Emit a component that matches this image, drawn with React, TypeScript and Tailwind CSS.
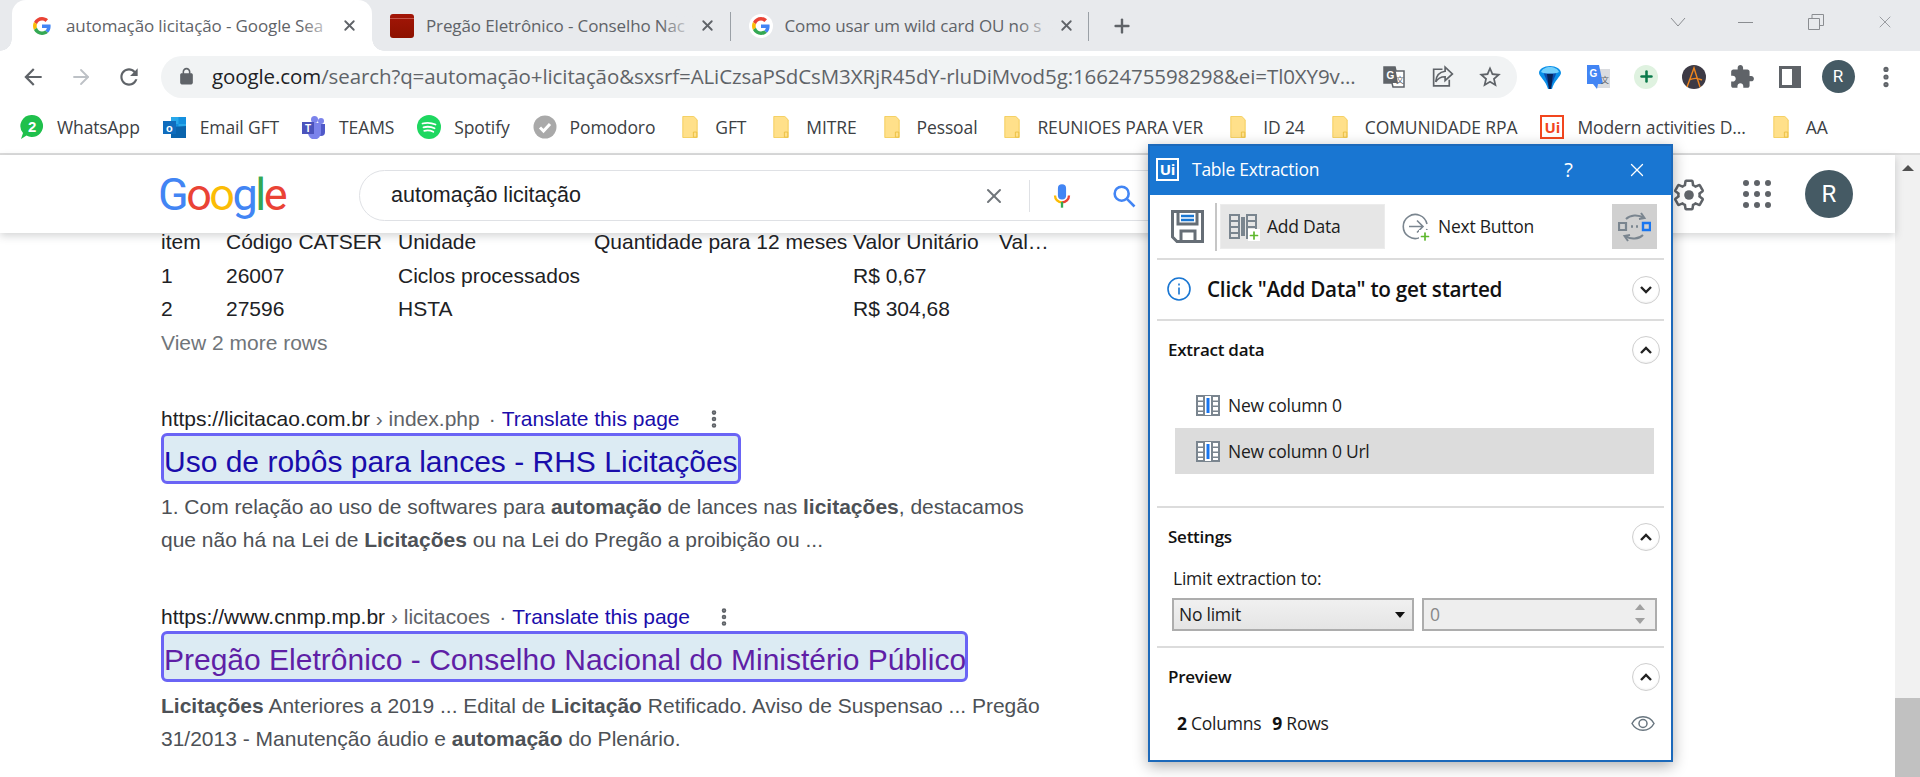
import { ArrowRight, EllipsisVertical, Plus, X } from 'lucide-react';
import type { ReactNode } from 'react';

/* material glyphs used by chrome and google */
const BACK = 'M20 11H7.83l5.59-5.59L12 4l-8 8 8 8 1.41-1.41L7.83 13H20v-2z';
const RELOAD =
  'M17.65 6.35C16.2 4.9 14.21 4 12 4c-4.42 0-7.99 3.58-7.99 8s3.57 8 7.99 8c3.73 0 6.84-2.55 7.73-6h-2.08c-.82 2.33-3.04 4-5.65 4-3.31 0-6-2.69-6-6s2.69-6 6-6c1.66 0 3.14.69 4.22 1.78L13 11h7V4l-2.35 2.35z';
const LOCK =
  'M18 8h-1V6c0-2.76-2.24-5-5-5S7 3.24 7 6v2H6c-1.1 0-2 .9-2 2v10c0 1.1.9 2 2 2h12c1.1 0 2-.9 2-2V10c0-1.1-.9-2-2-2zM9 6c0-1.66 1.34-3 3-3s3 1.34 3 3v2H9V6z';
const STAR =
  'M22 9.24l-7.19-.62L12 2 9.19 8.63 2 9.24l5.46 4.73L5.82 21 12 17.27 18.18 21l-1.63-7.03L22 9.24zM12 15.4l-3.76 2.27 1-4.28-3.32-2.88 4.38-.38L12 6.1l1.71 4.04 4.38.38-3.32 2.88 1 4.28L12 15.4z';
const PUZZLE =
  'M20.5 11H19V7c0-1.1-.9-2-2-2h-4V3.5C13 2.12 11.88 1 10.5 1S8 2.12 8 3.5V5H4c-1.1 0-1.99.9-1.99 2v3.8H3.5c1.49 0 2.7 1.21 2.7 2.7s-1.21 2.7-2.7 2.7H2V20c0 1.1.9 2 2 2h3.8v-1.5c0-1.49 1.21-2.7 2.7-2.7 1.49 0 2.7 1.21 2.7 2.7V22H17c1.1 0 2-.9 2-2v-4h1.5c1.38 0 2.5-1.12 2.5-2.5S21.88 11 20.5 11z';
const GEAR =
  'M19.43 12.98c.04-.32.07-.64.07-.98s-.03-.66-.07-.98l2.11-1.65c.19-.15.24-.42.12-.64l-2-3.46c-.12-.22-.39-.3-.61-.22l-2.49 1c-.52-.4-1.08-.73-1.69-.98l-.38-2.65C14.46 2.18 14.25 2 14 2h-4c-.25 0-.46.18-.49.42l-.38 2.65c-.61.25-1.17.59-1.69.98l-2.49-1c-.23-.09-.49 0-.61.22l-2 3.46c-.13.22-.07.49.12.64l2.11 1.65c-.04.32-.07.65-.07.98s.03.66.07.98l-2.11 1.65c-.19.15-.24.42-.12.64l2 3.46c.12.22.39.3.61.22l2.49-1c.52.4 1.08.73 1.69.98l.38 2.65c.03.24.24.42.49.42h4c.25 0 .46-.18.49-.42l.38-2.65c.61-.25 1.17-.59 1.69-.98l2.49 1c.23.09.49 0 .61-.22l2-3.46c.12-.22.07-.49-.12-.64l-2.11-1.65z';

function Glyph({ d, className }: { d: string; className?: string }) {
  return (
    <svg viewBox="0 0 24 24" fill="currentColor" className={className}>
      <path d={d} />
    </svg>
  );
}

function GoogleG({ className }: { className?: string }) {
  return (
    <svg viewBox="0 0 48 48" className={className}>
      <path fill="#EA4335" d="M24 9.5c3.54 0 6.71 1.22 9.21 3.6l6.85-6.85C35.9 2.38 30.47 0 24 0 14.62 0 6.51 5.38 2.56 13.22l7.98 6.19C12.43 13.72 17.74 9.5 24 9.5z" />
      <path fill="#4285F4" d="M46.98 24.55c0-1.57-.15-3.09-.38-4.55H24v9.02h12.94c-.58 2.96-2.26 5.48-4.78 7.18l7.73 6c4.51-4.18 7.09-10.36 7.09-17.65z" />
      <path fill="#FBBC05" d="M10.53 28.59c-.48-1.45-.76-2.99-.76-4.59s.27-3.14.76-4.59l-7.98-6.19C.92 16.46 0 20.12 0 24c0 3.88.92 7.54 2.56 10.78l7.97-6.19z" />
      <path fill="#34A853" d="M24 48c6.48 0 11.93-2.13 15.89-5.81l-7.73-6c-2.15 1.45-4.92 2.3-8.16 2.3-6.26 0-11.57-4.22-13.47-9.91l-7.98 6.19C6.51 42.62 14.62 48 24 48z" />
    </svg>
  );
}

function Tab({
  icon,
  title,
  active,
  divider,
}: {
  icon: ReactNode;
  title: string;
  active?: boolean;
  divider?: boolean;
}) {
  return (
    <div
      className={`relative flex h-[51px] items-center pl-[18px] pr-[11px] ${
        active ? 'w-[360px] rounded-t-[14px] bg-white' : 'w-[358.5px]'
      }`}
    >
      {active && (
        <>
          <span className="absolute -left-3 bottom-0 size-3 bg-[radial-gradient(circle_at_0_0,#e8eaed_11.5px,#fff_12px)]" />
          <span className="absolute -right-3 bottom-0 size-3 bg-[radial-gradient(circle_at_100%_0,#e8eaed_11.5px,#fff_12px)]" />
        </>
      )}
      <span className="flex w-6 shrink-0 justify-center">{icon}</span>
      <div className="relative ml-3 min-w-0 flex-1 overflow-hidden whitespace-nowrap text-[17px] tracking-[-0.12px] text-[#5f6368]">
        {title}
        <span
          className={`absolute inset-y-0 right-0 w-9 bg-gradient-to-r from-transparent ${
            active ? 'to-white' : 'to-[#e8eaed]'
          }`}
        />
      </div>
      <span className="flex w-6 shrink-0 justify-center">
        <X className="size-[17px] text-[#5f6368]" strokeWidth={2.6} />
      </span>
      {divider && <span className="absolute right-0 top-3 h-[29px] w-px bg-[#9aa0a6]" />}
    </div>
  );
}

function TabStrip() {
  return (
    <div className="flex h-[51px] items-start bg-[#e8eaed] pl-3">
      <Tab active icon={<GoogleG className="size-[18px]" />} title="automação licitação - Google Sea" />
      <Tab
        divider
        icon={
          <span className="h-6 w-6 rounded-[3px] bg-gradient-to-b from-[#a31608] to-[#8c1100]">
            <span className="mt-1 block h-px bg-[#c4564c]" />
          </span>
        }
        title="Pregão Eletrônico - Conselho Nac"
      />
      <Tab
        divider
        icon={
          <span className="flex size-6 items-center justify-center rounded-full bg-white">
            <GoogleG className="size-[18px]" />
          </span>
        }
        title="Como usar um wild card OU no s"
      />
      <div className="ml-[9px] flex h-[51px] w-12 items-center justify-center">
        <Plus className="size-[22px] text-[#5f6368]" strokeWidth={2.6} />
      </div>
      <div className="ml-auto flex h-[44px] items-center text-[#8a8d91]">
        <svg viewBox="0 0 16 10" className="mr-[52px] h-[10px] w-4" fill="none" stroke="currentColor">
          <path d="M1 1l7 8 7-8" />
        </svg>
        <span className="mr-[55px] h-px w-[15px] bg-current" />
        <svg viewBox="0 0 16 16" className="mr-[51px] size-[16px]" fill="none" stroke="currentColor">
          <path d="M.5 4.5h11v11H.5zM4 4.5V.5h11.5v11h-4" />
        </svg>
        <X className="mr-[25px] size-[20px]" strokeWidth={1} />
      </div>
    </div>
  );
}

function ToolSlot({ children }: { children: ReactNode }) {
  return <div className="flex h-12 w-12 shrink-0 items-center justify-center">{children}</div>;
}

function AddressBar() {
  return (
    <div className="flex h-[51px] items-center bg-white pl-[9px]">
      <ToolSlot>
        <Glyph d={BACK} className="size-[26px] text-[#5f6368]" />
      </ToolSlot>
      <ToolSlot>
        <ArrowRight className="size-[24px] text-[#bdc1c6]" strokeWidth={1.8} />
      </ToolSlot>
      <ToolSlot>
        <Glyph d={RELOAD} className="size-[26px] text-[#5f6368]" />
      </ToolSlot>
      <div className="ml-2 flex h-[42px] w-[1356px] items-center rounded-full bg-[#f1f3f4] pl-4 pr-[3px]">
        <Glyph d={LOCK} className="size-[19px] shrink-0 text-[#5f6368]" />
        <div className="ml-4 w-[1145px] whitespace-nowrap text-[20.5px] tracking-[-0.1px] text-[#5f6368]">
          <span className="text-[#202124]">google.com</span>
          /search?q=automação+licitação&amp;sxsrf=ALiCzsaPSdCsM3XRjR45dY-rluDiMvod5g:1662475598298&amp;ei=Tl0XY9v...
        </div>
        <div className="ml-auto flex">
          <ToolSlot>
            <svg viewBox="0 0 24 24" className="size-6">
              <path d="M2 2h11l1 4h8v16H11l-1-4H2z" fill="#fff" stroke="#5f6368" strokeWidth="1.5" />
              <path d="M2 2h11l3 16H2z" fill="#5f6368" />
              <text x="4.5" y="14" fontSize="10" fontWeight="700" fill="#fff" fontFamily="Liberation Sans, sans-serif">G</text>
              <text x="14" y="18" fontSize="8" fill="#5f6368" fontFamily="Noto Sans CJK SC, sans-serif">文</text>
            </svg>
          </ToolSlot>
          <ToolSlot>
            <svg viewBox="0 0 24 24" className="size-[25px]" fill="none" stroke="#5f6368" strokeWidth="1.6">
              <path d="M12 5H3.5v16h15v-6" />
              <path d="M14.5 3l7 6.5-7 6.5v-3.8c-4 0-7 1.3-9 5 .3-5.3 3.3-9.5 9-10.2z" />
            </svg>
          </ToolSlot>
          <ToolSlot>
            <Glyph d={STAR} className="size-[26px] text-[#5f6368]" />
          </ToolSlot>
        </div>
      </div>
      <div className="ml-[9px] flex">
        <ToolSlot>
          <svg viewBox="0 0 24 24" className="size-[24px]">
            <path d="M1 8c0-4 5-7 11-7s11 3 11 7c0 3-7 8-9 16h-4C8 16 1 11 1 8z" fill="#0a8fe8" />
            <path d="M6 8c0-3 3-6 6-6s6 3 6 6c0 3-4 8-5 16h-2C10 16 6 11 6 8z" fill="#0b4fae" />
            <path d="M3 7c1-3 5-5 9-5s8 2 9 5c-3 2-15 2-18 0z" fill="#74d0fb" />
            <path d="M9 9h6l-2 15h-2z" fill="#06235a" />
          </svg>
        </ToolSlot>
        <ToolSlot>
          <svg viewBox="0 0 24 26" className="size-[26px]">
            <path d="M11 5h13v19H11z" fill="#dadce0" />
            <path d="M1 1h12l4 19h-5l-1 5-4-5H1z" fill="#4285f4" />
            <text x="3.5" y="13" fontSize="10" fontWeight="700" fill="#fff" fontFamily="Liberation Sans, sans-serif">G</text>
            <text x="15" y="19" fontSize="8" fill="#5f6368" fontFamily="Noto Sans CJK SC, sans-serif">文</text>
          </svg>
        </ToolSlot>
        <ToolSlot>
          <span className="flex size-6 items-center justify-center rounded-full bg-[#dff2e0]">
            <Plus className="size-[17px] text-[#0b7a4b]" strokeWidth={3.6} />
          </span>
        </ToolSlot>
        <ToolSlot>
          <span className="flex size-6 items-center justify-center rounded-full bg-[#3d3a45]">
            <svg viewBox="0 0 24 24" className="size-6" fill="none" stroke="#f0861e" strokeWidth="1.4">
              <path d="M5 22L12 3l6 19M7 15c4-2 9-2 13 0" />
            </svg>
          </span>
        </ToolSlot>
        <ToolSlot>
          <Glyph d={PUZZLE} className="size-[26px] text-[#5f6368]" />
        </ToolSlot>
        <ToolSlot>
          <svg viewBox="0 0 22 22" className="size-[22px]">
            <path d="M0 0h22v22H0z" fill="#5f6368" />
            <path d="M3 3h10v16H3z" fill="#fff" />
          </svg>
        </ToolSlot>
        <ToolSlot>
          <span className="flex size-[33px] items-center justify-center rounded-full bg-[#455a64] font-['Roboto',sans-serif] text-[17px] text-white">
            R
          </span>
        </ToolSlot>
        <ToolSlot>
          <EllipsisVertical className="size-[26px] text-[#5f6368]" strokeWidth={2.8} />
        </ToolSlot>
      </div>
    </div>
  );
}

function Folder() {
  return (
    <svg viewBox="0 0 18 26" className="h-[22px] w-[18px]">
      <path d="M.5.5h13l4 4v21H.5z" fill="#ffe08a" stroke="#f2c94c" />
      <path d="M13 19h4v6h-4z" fill="#ffe08a" stroke="#e9bd3a" />
    </svg>
  );
}

function Bookmark({ icon, label }: { icon: ReactNode; label: string }) {
  return (
    <div className="flex items-center gap-[13px] whitespace-nowrap">
      <span className="flex w-6 shrink-0 justify-center">{icon}</span>
      <span>{label}</span>
    </div>
  );
}

function BookmarksBar() {
  return (
    <div className="flex h-[53px] items-center gap-[23px] border-b-2 border-[#dcdcdc] bg-white pb-px pl-5 text-[17.5px] tracking-[-0.12px] text-[#3c4043]">
      <Bookmark
        label="WhatsApp"
        icon={
          <svg viewBox="0 0 24 26" className="h-[26px] w-6">
            <path d="M12 1a11 11 0 1 1-5.500 20.500L1 25l2-6A11 11 0 0 1 12 1z" fill="#1fc04c" />
            <text x="12" y="18" fontSize="15" fontWeight="700" fill="#fff" textAnchor="middle" fontFamily="Liberation Sans, sans-serif">2</text>
          </svg>
        }
      />
      <Bookmark
        label="Email GFT"
        icon={
          <svg viewBox="0 0 24 24" className="size-6">
            <path d="M8 2h15v20H8z" fill="#1490df" />
            <path d="M8 2h7.5v7H8zM15.5 9H23v7h-7.5z" fill="#28a8ea" />
            <path d="M8 12l15-1v12H8z" fill="#0a64ad" />
            <path d="M0 6h13v13H0z" fill="#0f6cbd" />
            <text x="3" y="16.5" fontSize="11" fontWeight="700" fill="#fff" fontFamily="Liberation Sans, sans-serif">o</text>
          </svg>
        }
      />
      <Bookmark
        label="TEAMS"
        icon={
          <svg viewBox="0 0 24 24" className="size-6">
            <circle cx="19" cy="6" r="3" fill="#7b83eb" />
            <circle cx="12.5" cy="4.5" r="3.5" fill="#7b83eb" />
            <path d="M15 9h8v8a4 4 0 0 1-8 0z" fill="#5059c9" />
            <path d="M6 8h13v10a6 6 0 0 1-13 0z" fill="#7b83eb" />
            <path d="M0 7h12v12H0z" fill="#4b53bc" />
            <text x="3" y="16.5" fontSize="10" fontWeight="700" fill="#fff" fontFamily="Liberation Sans, sans-serif">T</text>
          </svg>
        }
      />
      <Bookmark
        label="Spotify"
        icon={
          <svg viewBox="0 0 24 24" className="size-6">
            <circle cx="12" cy="12" r="12" fill="#1ed760" />
            <path d="M5.5 8.5c4.5-1.2 9-.8 13 1M6.5 12.3c3.8-1 7.5-.7 11 1M7.3 15.8c3-.7 6-.5 9 1" fill="none" stroke="#fff" strokeWidth="1.8" strokeLinecap="round" />
          </svg>
        }
      />
      <Bookmark
        label="Pomodoro"
        icon={
          <svg viewBox="0 0 24 24" className="size-6">
            <circle cx="12" cy="12" r="11.5" fill="#a9a9a9" />
            <path d="M7 12.5l3.5 3.5L17 9" fill="none" stroke="#fff" strokeWidth="3" />
          </svg>
        }
      />
      <Bookmark label="GFT" icon={<Folder />} />
      <Bookmark label="MITRE" icon={<Folder />} />
      <Bookmark label="Pessoal" icon={<Folder />} />
      <Bookmark label="REUNIOES PARA VER" icon={<Folder />} />
      <Bookmark label="ID 24" icon={<Folder />} />
      <Bookmark label="COMUNIDADE RPA" icon={<Folder />} />
      <Bookmark
        label="Modern activities D..."
        icon={
          <span className="flex size-6 items-center justify-center border-2 border-[#f2461e] bg-white text-[15px] font-bold leading-none text-[#f2461e]">
            Ui
          </span>
        }
      />
      <Bookmark label="AA" icon={<Folder />} />
    </div>
  );
}

function GoogleHeader() {
  return (
    <div className="relative z-10 flex h-[78px] items-center bg-white pl-[158px] shadow-[0_3px_8px_rgba(60,64,67,0.22)]">
      <div className="w-[201px] font-['Roboto',sans-serif] text-[45px] leading-none tracking-[-2.5px]">
        <span className="text-[#4285f4]">G</span>
        <span className="text-[#ea4335]">o</span>
        <span className="text-[#fbbc05]">o</span>
        <span className="text-[#4285f4]">g</span>
        <span className="text-[#34a853]">l</span>
        <span className="text-[#ea4335]">e</span>
      </div>
      <div className="mt-[3px] flex h-[51px] w-[880px] items-center rounded-full border border-[#dfe1e5] pl-[31px] font-['Liberation_Sans',sans-serif] text-[21.5px] text-[#202124]">
        <span>automação licitação</span>
      </div>
      <X className="absolute left-[982px] top-[29px] size-[24px] text-[#70757a]" strokeWidth={2} />
      <span className="absolute left-[1029px] top-[25px] h-8 w-px bg-[#dfe1e5]" />
      <svg viewBox="0 0 24 24" className="absolute left-[1048px] top-[26px] h-[30px] w-[28px]">
        <path d="M12 15a3.5 3.5 0 0 0 3.5-3.5v-6a3.5 3.5 0 0 0-7 0v6A3.5 3.5 0 0 0 12 15z" fill="#4285f4" />
        <path d="M18 11.5c0 3.3-2.7 6-6 6" fill="none" stroke="#ea4335" strokeWidth="2" />
        <path d="M6 11.5c0 3.3 2.700 6 6 6" fill="none" stroke="#fbbc05" strokeWidth="2" />
        <path d="M11 17h2v5h-2z" fill="#34a853" />
      </svg>
      <svg viewBox="0 0 24 24" className="absolute left-[1110px] top-[27px] size-[28px]" fill="none" stroke="#4285f4" strokeWidth="2.2">
        <circle cx="10" cy="10" r="6" />
        <path d="M14.500 14.500L21 21" />
      </svg>
      <span className="absolute left-[1672px] top-[23px] text-[#5f6368]">
        <svg viewBox="0 0 24 24" className="size-[34px]">
          <path d={GEAR} fill="none" stroke="currentColor" strokeWidth="1.800" />
          <circle cx="12" cy="12" r="3.400" fill="currentColor" />
        </svg>
      </span>
      <div className="absolute left-[1743px] top-[25px] grid grid-cols-3 gap-[5px]">
        {Array.from({ length: 9 }, (_, i) => (
          <span key={i} className="size-[6px] rounded-full bg-[#5f6368]" />
        ))}
      </div>
      <span className="absolute left-[1805px] top-[15px] flex size-12 items-center justify-center rounded-full bg-[#455a64] font-['Roboto',sans-serif] text-[24px] text-white">
        R
      </span>
    </div>
  );
}

function ResultUrl({ host, path }: { host: string; path: string }) {
  return (
    <div className="flex h-6 items-center whitespace-nowrap text-[21px] text-[#202124]">
      {host}
      <span className="text-[#5f6368]">
        &nbsp;›&nbsp;{path}
        <span className="ml-[9px] mr-[6px]">·</span>
      </span>
      <span className="text-[#1a0dab]">Translate this page</span>
      <span className="ml-[23px]">
        <EllipsisVertical className="size-[22px] text-[#5f6368]" strokeWidth={3} />
      </span>
    </div>
  );
}

function TitleBox({ children, color, width }: { children: ReactNode; color: string; width: string }) {
  return (
    <div
      className={`mt-[2px] flex h-[51px] items-center whitespace-nowrap rounded-[6px] border-[3px] border-[#6a64f5] bg-[#dcebf3] pt-[6px] text-[30px] ${color} ${width}`}
    >
      {children}
    </div>
  );
}

function SearchResults() {
  const rows = [
    ['item', 'Código CATSER', 'Unidade', 'Quantidade para 12 meses', 'Valor Unitário', 'Val…'],
    ['1', '26007', 'Ciclos processados', '', 'R$ 0,67', ''],
    ['2', '27596', 'HSTA', '', 'R$ 304,68', ''],
  ];
  return (
    <div className="pl-[161px] font-['Liberation_Sans',sans-serif]">
      <div className="-mt-2 grid w-[886px] grid-cols-[65px_172px_196px_259px_146px_48px] text-[21px] text-[#202124]">
        {rows.flat().map((cell, i) => (
          <div key={i} className="flex h-[33.5px] items-center whitespace-nowrap">
            {cell}
          </div>
        ))}
      </div>
      <div className="flex h-[33.5px] items-center text-[21px] text-[#70757a]">View 2 more rows</div>

      <div className="mt-[48px]">
        <ResultUrl host="https://licitacao.com.br" path="index.php" />
        <TitleBox color="text-[#1a0dab]" width="w-[580px]">
          Uso de robôs para lances - RHS Licitações
        </TitleBox>
        <div className="mt-[6px] text-[21px] leading-[33px] text-[#4d5156]">
          <div>
            1. Com relação ao uso de softwares para <b>automação</b> de lances nas <b>licitações</b>, destacamos
          </div>
          <div>
            que não há na Lei de <b>Licitações</b> ou na Lei do Pregão a proibição ou ...
          </div>
        </div>
      </div>

      <div className="mt-[49px]">
        <ResultUrl host="https://www.cnmp.mp.br" path="licitacoes" />
        <TitleBox color="text-[#5f1fa6]" width="w-[807px]">
          Pregão Eletrônico - Conselho Nacional do Ministério Público
        </TitleBox>
        <div className="mt-2 text-[21px] leading-[32.5px] text-[#4d5156]">
          <div>
            <b>Licitações</b> Anteriores a 2019 ... Edital de <b>Licitação</b> Retificado. Aviso de Suspensao ... Pregão
          </div>
          <div>
            31/2013 - Manutenção áudio e <b>automação</b> do Plenário.
          </div>
        </div>
      </div>
    </div>
  );
}

function Scrollbar() {
  return (
    <div className="flex h-full w-[25px] shrink-0 flex-col items-center justify-between bg-[#f1f1f1]">
      <span className="mt-[10px] h-0 w-0 border-x-[6px] border-b-[6px] border-x-transparent border-b-[#505050]" />
      <span className="h-[79px] w-full bg-[#c1c1c1]" />
    </div>
  );
}

function ColumnIcon() {
  return (
    <svg viewBox="0 0 24 21" className="h-[21px] w-6 shrink-0">
      <path d="M0 0h24v21H0z" fill="#7a858f" />
      <path d="M2 2h5v3.500H2zM2 7h5v3.500H2zM2 12h5v3.500H2zM17 2h5v3.500h-5zM17 7h5v3.500h-5zM17 12h5v3.500h-5zM2 17h5v2H2zM17 17h5v2h-5z" fill="#fff" />
      <path d="M9 1h6v19H9z" fill="#fff" />
      <path d="M10.500 3h3v15h-3z" fill="#1976f0" />
    </svg>
  );
}

function RoundChevron({ up }: { up?: boolean }) {
  return (
    <span className="flex size-[28px] items-center justify-center rounded-full border-[1.5px] border-[#cfcfcf] bg-white shadow-[inset_0_-1px_2px_rgba(0,0,0,0.06)]">
      <svg viewBox="0 0 12 8" className="h-2 w-3" fill="none" stroke="#222" strokeWidth="2.400">
        <path d={up ? 'M1 7l5-5 5 5' : 'M1 1l5 5 5-5'} />
      </svg>
    </span>
  );
}

function SectionHead({ title }: { title: string }) {
  return (
    <div className="flex h-[58px] items-center justify-between pl-[11px] pr-[4px]">
      <span className="text-[17px] font-semibold text-[#111]">{title}</span>
      <RoundChevron up />
    </div>
  );
}

function GreenPlus() {
  return (
    <span className="absolute -bottom-[2px] -right-[2px] flex size-[12px] items-center justify-center bg-white">
      <Plus className="size-[13px] text-[#5fb82f]" strokeWidth={3.4} />
    </span>
  );
}

function TableExtraction() {
  return (
    <div className="absolute left-[1148px] top-[144px] z-20 flex h-[618px] w-[525px] flex-col border-2 border-[#1c69ba] bg-white font-['Open_Sans',sans-serif] text-[17.5px] tracking-[-0.25px] text-[#1c1c1c] shadow-[0_4px_14px_rgba(0,0,0,0.32)]">
      <div className="flex h-[49px] shrink-0 items-center bg-[#1976d2] pb-[2px] pl-[6px] text-white">
        <span className="flex size-[23px] items-center justify-center border-2 border-white pb-px text-[15px] font-bold leading-none">
          Ui
        </span>
        <span className="ml-[13px] text-[17.5px]">Table Extraction</span>
        <span className="ml-[245px] text-[20px]">?</span>
        <X className="ml-[53px] size-[22px]" strokeWidth={1.4} />
      </div>

      <div className="mx-[7px] flex flex-col">
        <div className="flex h-[65px] items-center border-b-2 border-[#dcdcdc] pl-[14px] pr-[7px]">
          <svg viewBox="0 0 33 33" className="size-[33px] shrink-0" fill="none" stroke="#666e76" strokeWidth="3">
            <path d="M1.500 1.500h30v30H6l-4.500-4.500z" />
            <path d="M7 2v12h19V2" />
            <path d="M10 31V21h14v10" />
            <path d="M10 6h13M10 10h13" stroke="#1976d2" strokeWidth="2.400" />
          </svg>
          <span className="ml-[11px] h-12 w-[2px] bg-[#c6c6c6]" />
          <div className="ml-[3px] flex h-[45px] w-[165px] items-center border border-[#ececec] bg-[#e6e6e6] pl-[8px]">
            <span className="relative block h-[25px] w-[29px]">
              <svg viewBox="0 0 29 25" className="h-[25px] w-[29px]">
                <path d="M0 0h28v25H0z" fill="#7a858f" />
                <path d="M2 2h7v4H2zM2 8h7v4H2zM2 14h7v4H2zM2 20h7v3H2zM19 2h7v4h-7zM19 8h7v4h-7zM19 14h7v4h-7z" fill="#e6e6e6" />
                <path d="M11 0h6v25h-6z" fill="#e6e6e6" />
                <path d="M12 3h4v19h-4z" fill="#7a858f" />
              </svg>
              <GreenPlus />
            </span>
            <span className="ml-[9px]">Add Data</span>
          </div>
          <div className="ml-[17px] flex items-center">
            <span className="relative block size-[27px]">
              <svg viewBox="0 0 27 27" className="size-[27px]" fill="none" stroke="#7a858f" strokeWidth="1.600">
                <path d="M25 16a12 12 0 1 1 0-5" />
                <path d="M7 13.500h14M15 7.500l6 6-6 6" />
              </svg>
              <GreenPlus />
            </span>
            <span className="ml-[9px]">Next Button</span>
          </div>
          <div className="ml-auto flex h-[45px] w-[45px] items-center justify-center bg-[#d0d0d0]">
            <svg viewBox="0 0 33 30" className="h-[30px] w-[33px]" fill="none" stroke="#7a858f" strokeWidth="2">
              <path d="M8 7c4-4 12-5 18-1M23 1l3.500 5-5.500 1M25 23c-4 4-12 5-18 1M10 29l-3.500-5 5.500-1" />
              <path d="M1 11h7v7H1z" strokeWidth="2.200" />
              <path d="M25 11h7v7h-7z" stroke="#1976f0" strokeWidth="2.400" />
              <path d="M13 14.500h2M18 14.500h2" strokeWidth="2.400" />
            </svg>
          </div>
        </div>

        <div className="flex h-[61px] items-center justify-between border-b-2 border-[#dcdcdc] pl-[10px] pr-[4px]">
          <div className="flex items-center">
            <svg viewBox="0 0 24 24" className="size-6" fill="none" stroke="#1976d2" strokeWidth="1.600">
              <circle cx="12" cy="12" r="11" />
              <path d="M12 10.500v7M12 6.500v2" />
            </svg>
            <span className="ml-[16px] text-[20.7px] font-semibold text-[#111]">Click &quot;Add Data&quot; to get started</span>
          </div>
          <RoundChevron />
        </div>

        <div className="h-[187px] border-b-2 border-[#dcdcdc]">
          <SectionHead title="Extract data" />
          <div className="mt-[3px] flex h-[46px] items-center pl-[39px]">
            <ColumnIcon />
            <span className="ml-2">New column 0</span>
          </div>
          <div className="ml-[18px] mr-[10px] flex h-[46px] items-center bg-[#dcdcdc] pl-[21px]">
            <ColumnIcon />
            <span className="ml-2">New column 0 Url</span>
          </div>
        </div>

        <div className="h-[140px] border-b-2 border-[#dcdcdc]">
          <SectionHead title="Settings" />
          <div className="pl-[16px] leading-[25px]">Limit extraction to:</div>
          <div className="mt-[7px] flex gap-2 pl-[15px]">
            <div className="relative flex h-[33px] w-[242px] items-center border-2 border-[#adadad] bg-gradient-to-b from-[#f0f0f0] to-[#e5e5e5] pl-[5px]">
              No limit
              <span className="absolute right-[7px] top-[12px] h-0 w-0 border-x-[5px] border-t-[6px] border-x-transparent border-t-[#111]" />
            </div>
            <div className="relative flex h-[33px] w-[235px] items-center border-2 border-[#adadad] bg-[#eeeeee] pl-[6px] text-[#888]">
              0
              <span className="absolute right-[10px] top-[4px] h-0 w-0 border-x-[5px] border-b-[6px] border-x-transparent border-b-[#a0a0a0]" />
              <span className="absolute right-[10px] top-[18px] h-0 w-0 border-x-[5px] border-t-[6px] border-x-transparent border-t-[#a0a0a0]" />
            </div>
          </div>
        </div>

        <div>
          <SectionHead title="Preview" />
          <div className="mt-[2px] flex h-[30px] items-center justify-between pl-[20px] pr-[9px]">
            <span>
              <b className="font-bold text-[#111]">2</b> Columns<span className="ml-[11px]" />
              <b className="font-bold text-[#111]">9</b> Rows
            </span>
            <svg viewBox="0 0 24 16" className="h-[17px] w-6" fill="none" stroke="#68757f" strokeWidth="1.500">
              <path d="M1 8c5-9 17-9 22 0-5 9-17 9-22 0z" />
              <circle cx="12" cy="8" r="4" />
            </svg>
          </div>
        </div>
      </div>
    </div>
  );
}

export default function App() {
  return (
    <div className="relative h-[777px] w-[1920px] overflow-hidden bg-white font-['Open_Sans',sans-serif]">
      <TabStrip />
      <AddressBar />
      <BookmarksBar />
      <div className="flex h-[622px]">
        <div className="min-w-0 flex-1">
          <GoogleHeader />
          <SearchResults />
        </div>
        <Scrollbar />
      </div>
      <TableExtraction />
    </div>
  );
}
